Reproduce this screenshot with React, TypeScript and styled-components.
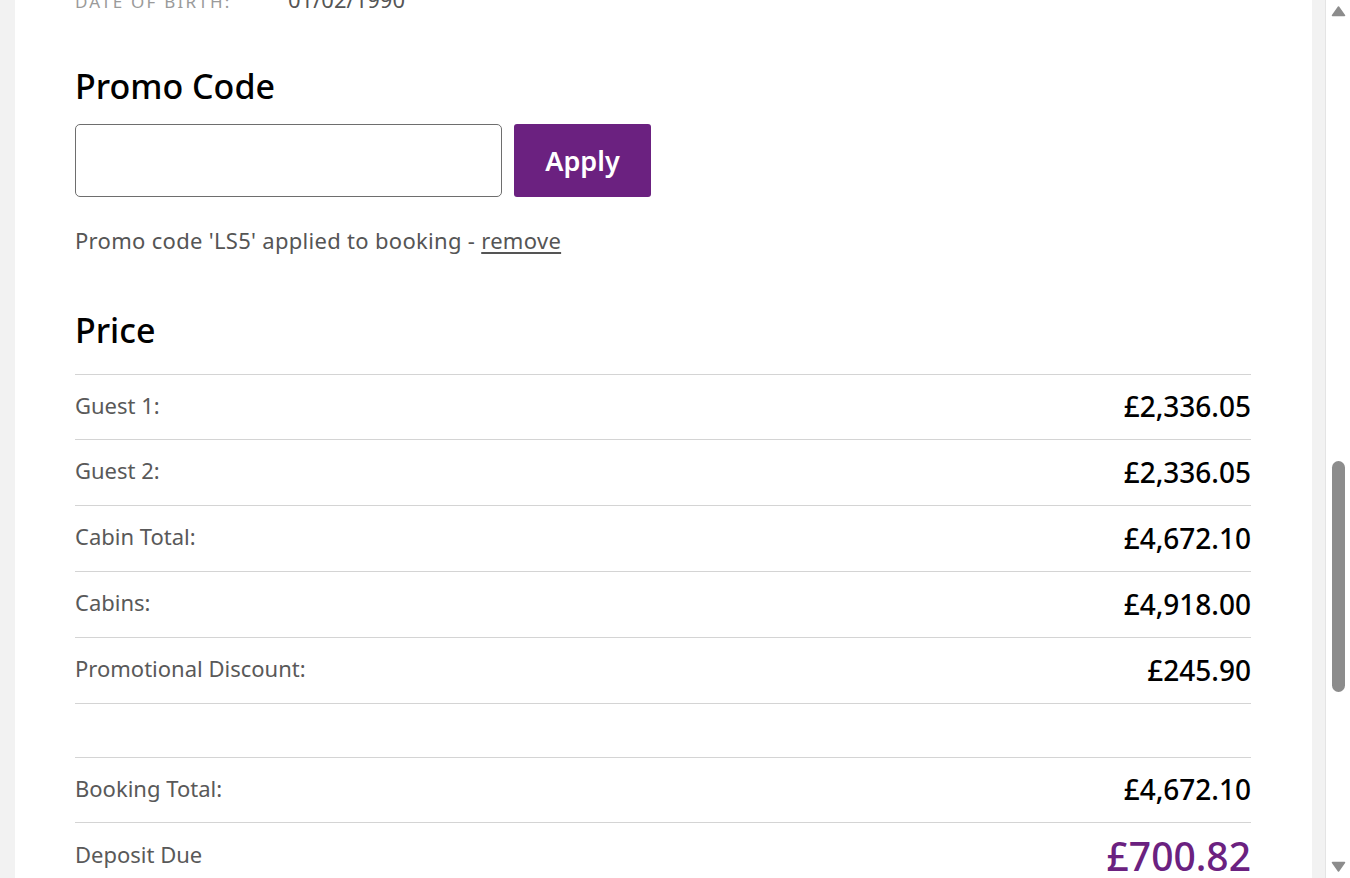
import React from "react";
import styled, { createGlobalStyle } from "styled-components";

const GlobalStyle = createGlobalStyle`
  html, body {
    margin: 0;
    height: 100%;
    overflow: hidden;
    background: #f2f2f2;
  }
  * {
    box-sizing: border-box;
  }
`;

const StyledPage = styled.div`
  display: flex;
  height: 100vh;
  overflow: hidden;
  padding-left: 15px;
  background: #f2f2f2;
  font-family: "Noto Sans", Lato, Arial, sans-serif;
`;

const StyledCard = styled.main`
  flex: 1;
  background: #fff;
  padding: 0 61px 0 60px;
  margin-right: 13px;
  color: #000;
  overflow: hidden;
`;

const StyledScrollbar = styled.div`
  display: flex;
  flex-direction: column;
  align-items: center;
  width: 25px;
  padding: 6px 0 6px 1px;
  background: #fff;
  border-left: 1px solid #e4e4e4;
`;

const StyledTrack = styled.div<{ $offset: number }>`
  flex: 1;
  display: flex;
  flex-direction: column;
  align-items: center;
  padding-top: ${(p) => p.$offset}px;
`;

const StyledThumb = styled.div<{ $size: number }>`
  width: 13px;
  height: ${(p) => p.$size}px;
  border-radius: 7px;
  background: #8c8c8c;
`;

const StyledDetailRow = styled.div`
  display: grid;
  grid-template-columns: 213px 1fr;
  align-items: baseline;
  margin-top: -16px;
  height: 24px;
`;

const StyledDetailLabel = styled.span`
  font-size: 17px;
  letter-spacing: 0.13em;
  text-transform: uppercase;
  color: #9a9a9a;
`;

const StyledDetailValue = styled.span`
  font-size: 22px;
  color: #555;
`;

const StyledHeading = styled.h2<{ $space: number }>`
  margin: 0 0 ${(p) => p.$space}px;
  font-size: 34px;
  font-weight: 500;
  line-height: 1.2;
  color: #000;
`;

const StyledPromoForm = styled.form`
  display: flex;
  gap: 12px;
  margin-bottom: 28px;
`;

const StyledInput = styled.input`
  width: 427px;
  height: 73px;
  border: 1px solid #6e6e6e;
  border-radius: 5px;
  padding: 0 16px;
  font: inherit;
  font-size: 20px;
  outline: none;
`;

const StyledApply = styled.button`
  width: 137px;
  height: 73px;
  border: none;
  border-radius: 3px;
  background: #6b2180;
  color: #fff;
  font-family: inherit;
  font-size: 27px;
  font-weight: 600;
  cursor: pointer;
`;

const StyledPromoNote = styled.p`
  margin: 0 0 55px;
  font-size: 22px;
  letter-spacing: 0.3px;
  color: #555;
  > a {
    color: #555;
    text-decoration: underline;
    text-underline-offset: 3px;
  }
`;

const StyledPriceList = styled.div`
  border-top: 1px solid #d4d4d4;
`;

const StyledPriceRow = styled.div<{ $height?: number }>`
  display: flex;
  justify-content: space-between;
  align-items: center;
  height: ${(p) => p.$height ?? 66}px;
  border-bottom: 1px solid #d4d4d4;
`;

const StyledPriceLabel = styled.span`
  padding-bottom: 4px;
  font-size: 22px;
  color: #595959;
`;

const StyledPriceValue = styled.span<{ $accent?: boolean }>`
  font-size: ${(p) => (p.$accent ? 39 : 28)}px;
  font-weight: 500;
  line-height: 1.1;
  color: ${(p) => (p.$accent ? "#6b2180" : "#000")};
`;

const prices = [
  { label: "Guest 1:", value: "£2,336.05", height: 65 },
  { label: "Guest 2:", value: "£2,336.05" },
  { label: "Cabin Total:", value: "£4,672.10" },
  { label: "Cabins:", value: "£4,918.00" },
  { label: "Promotional Discount:", value: "£245.90" },
];

const Arrow = ({ down }: { down?: boolean }) => (
  <svg width="15" height="11" viewBox="0 0 15 11">
    <path
      d={down ? "M1.5 1.5h12L7.5 10z" : "M7.5 1l6 8.5h-12z"}
      fill="#8c8c8c"
      stroke="#8c8c8c"
      strokeLinejoin="round"
      strokeWidth="1.5"
    />
  </svg>
);

const App = () => {
  return (
    <StyledPage>
      <GlobalStyle />
      <StyledCard>
        <StyledDetailRow>
          <StyledDetailLabel>Date of birth:</StyledDetailLabel>
          <StyledDetailValue>01/02/1990</StyledDetailValue>
        </StyledDetailRow>

        <StyledHeading $space={17} style={{ marginTop: 58 }}>
          Promo Code
        </StyledHeading>
        <StyledPromoForm onSubmit={(e) => e.preventDefault()}>
          <StyledInput type="text" />
          <StyledApply type="submit">Apply</StyledApply>
        </StyledPromoForm>
        <StyledPromoNote>
          Promo code 'LS5' applied to booking - <a href="#">remove</a>
        </StyledPromoNote>

        <StyledHeading $space={23}>Price</StyledHeading>
        <StyledPriceList>
          {prices.map((p) => (
            <StyledPriceRow key={p.label} $height={p.height}>
              <StyledPriceLabel>{p.label}</StyledPriceLabel>
              <StyledPriceValue>{p.value}</StyledPriceValue>
            </StyledPriceRow>
          ))}
          <StyledPriceRow $height={54} />
          <StyledPriceRow $height={65}>
            <StyledPriceLabel>Booking Total:</StyledPriceLabel>
            <StyledPriceValue>£4,672.10</StyledPriceValue>
          </StyledPriceRow>
          <StyledPriceRow $height={68}>
            <StyledPriceLabel>Deposit Due</StyledPriceLabel>
            <StyledPriceValue $accent>£700.82</StyledPriceValue>
          </StyledPriceRow>
        </StyledPriceList>
      </StyledCard>
      <StyledScrollbar>
        <Arrow />
        <StyledTrack $offset={444}>
          <StyledThumb $size={231} />
        </StyledTrack>
        <Arrow down />
      </StyledScrollbar>
    </StyledPage>
  );
};

export default App;
